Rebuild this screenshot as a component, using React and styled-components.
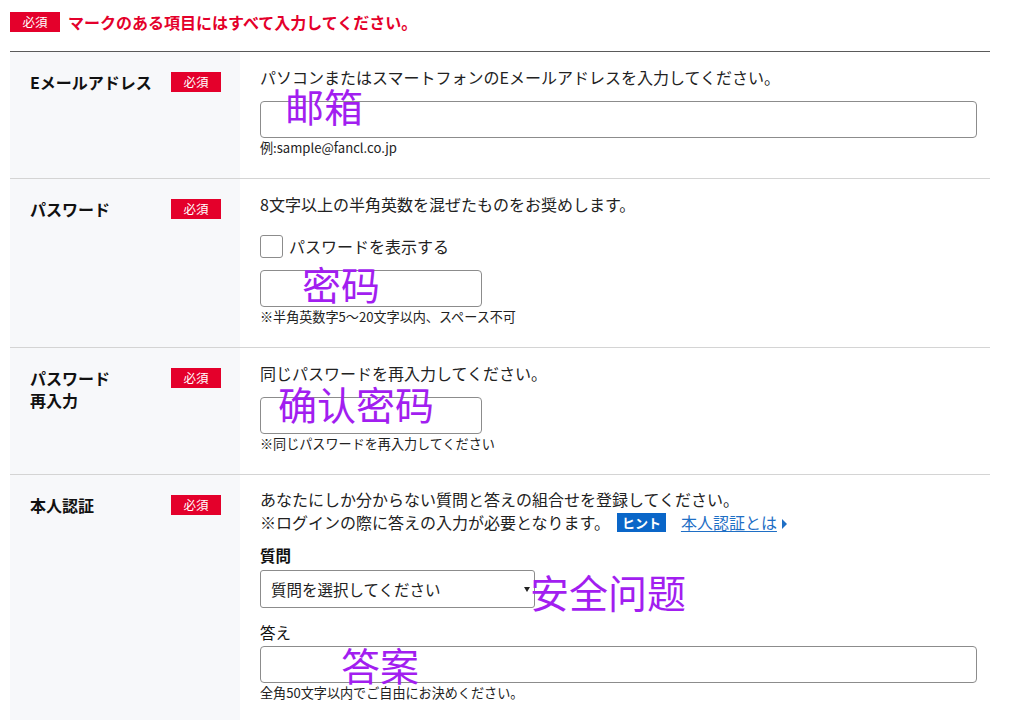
import React from "react";
import styled, { createGlobalStyle } from "styled-components";

const GlobalStyle = createGlobalStyle`
  html, body { margin: 0; padding: 0; background: #fff; }
  body {
    font-family: "Noto Sans CJK JP", "Noto Sans", sans-serif;
    color: #222;
  }
  * { box-sizing: border-box; }
`;

const Page = styled.div`
  width: 990px;
  padding: 12px 0 0 10px;
`;

const Notice = styled.div`
  display: flex;
  align-items: center;
  gap: 8px;
  height: 20px;
  margin-bottom: 19px;
`;

const NoticeText = styled.span`
  color: #e4002b;
  font-weight: 700;
  font-size: 16px;
  line-height: 20px;
`;

const Badge = styled.span`
  display: inline-flex;
  align-items: center;
  justify-content: center;
  flex: none;
  width: 50px;
  height: 20px;
  background: #e4002b;
  color: #fff;
  font-size: 12.5px;
  line-height: 1;
`;

const Form = styled.div`
  border-top: 1px solid #5a5a5a;
`;

const Row = styled.div`
  display: grid;
  grid-template-columns: 230px 1fr;
  border-bottom: ${(p) => (p.$last ? "none" : "1px solid #d4d4d4")};
`;

const LabelCell = styled.div`
  background: #f7f8fa;
  display: flex;
  justify-content: space-between;
  align-items: flex-start;
  padding: 20px 19px 20px 20px;
`;

const Label = styled.div`
  font-weight: 700;
  font-size: 16px;
  line-height: 22px;
  color: #111;
  margin-top: -1px;
`;

const FieldCell = styled.div`
  padding: 13px 13px 21px 20px;
  display: flex;
  flex-direction: column;
  align-items: flex-start;
`;

const Desc = styled.p`
  margin: 0;
  font-size: 16px;
  line-height: ${(p) => (p.$tight ? "23px" : "24px")};
  color: #222;
`;

const Hint = styled.div`
  margin-top: 1px;
  font-size: 13.1px;
  line-height: 18px;
  color: #222;
`;

const FieldWrap = styled.div`
  position: relative;
  margin-top: ${(p) => p.$mt ?? 12}px;
  width: ${(p) => (p.$full ? "100%" : "auto")};
`;

const TextInput = styled.input`
  display: block;
  width: ${(p) => (p.$w ? `${p.$w}px` : "100%")};
  height: 37px;
  border: 1px solid #8c8c8c;
  border-radius: 4px;
  background: #fff;
  padding: 0 10px;
  font: inherit;
  font-size: 15px;
  outline: none;
`;

const Annotation = styled.span`
  position: absolute;
  left: ${(p) => p.$x}px;
  top: ${(p) => p.$y}px;
  font-family: "Noto Sans CJK SC", "Noto Sans", sans-serif;
  font-size: 39px;
  line-height: 1;
  color: #a21ef0;
  white-space: nowrap;
  pointer-events: none;
`;

const CheckRow = styled.label`
  display: flex;
  align-items: center;
  gap: 6px;
  margin-top: 19px;
  font-size: 16px;
  line-height: 23px;
`;

const CheckBox = styled.span`
  display: inline-block;
  width: 23px;
  height: 23px;
  border: 1px solid #8c8c8c;
  border-radius: 3px;
  background: #fff;
`;

const HintBadge = styled.span`
  display: inline-flex;
  align-items: center;
  justify-content: center;
  vertical-align: 1px;
  width: 49px;
  height: 19px;
  margin-left: 7px;
  background: #0a66c8;
  color: #fff;
  font-weight: 700;
  font-size: 13px;
  line-height: 1;
`;

const HelpLink = styled.a`
  margin-left: 15px;
  color: #1f6fc5;
  text-decoration: underline;
  text-underline-offset: 2px;
  cursor: pointer;
`;

const Arrow = styled.span`
  display: inline-block;
  margin-left: 5px;
  width: 0;
  height: 0;
  border-top: 5px solid transparent;
  border-bottom: 5px solid transparent;
  border-left: 5px solid #1f6fc5;
  vertical-align: 0px;
`;

const SubLabel = styled.div`
  margin-top: ${(p) => p.$mt}px;
  font-size: 15.5px;
  line-height: 22px;
  font-weight: ${(p) => (p.$bold ? 700 : 400)};
  color: #111;
`;

const Select = styled.select`
  display: block;
  appearance: none;
  -webkit-appearance: none;
  width: 275px;
  height: 38px;
  border: 1px solid #8c8c8c;
  border-radius: 3px;
  background: #fff;
  padding: 0 10px;
  font: inherit;
  font-size: 15.5px;
  color: #222;
`;

const Caret = styled.span`
  position: absolute;
  left: 264px;
  top: 17px;
  width: 0;
  height: 0;
  border-left: 3px solid transparent;
  border-right: 3px solid transparent;
  border-top: 5px solid #222;
  pointer-events: none;
`;

function Req() {
  return <Badge>必須</Badge>;
}

export default function App() {
  return (
    <>
      <GlobalStyle />
      <Page>
        <Notice>
          <Badge>必須</Badge>
          <NoticeText>マークのある項目にはすべて入力してください。</NoticeText>
        </Notice>
        <Form>
          <Row>
            <LabelCell>
              <Label>Eメールアドレス</Label>
              <Req />
            </LabelCell>
            <FieldCell>
              <Desc>パソコンまたはスマートフォンのEメールアドレスを入力してください。</Desc>
              <FieldWrap $full>
                <TextInput type="text" />
                <Annotation $x={25} $y={-15}>邮箱</Annotation>
              </FieldWrap>
              <Hint>例:sample@fancl.co.jp</Hint>
            </FieldCell>
          </Row>

          <Row>
            <LabelCell>
              <Label>パスワード</Label>
              <Req />
            </LabelCell>
            <FieldCell>
              <Desc>8文字以上の半角英数を混ぜたものをお奨めします。</Desc>
              <CheckRow>
                <CheckBox />
                パスワードを表示する
              </CheckRow>
              <FieldWrap>
                <TextInput type="password" $w={222} />
                <Annotation $x={42} $y={-6}>密码</Annotation>
              </FieldWrap>
              <Hint>※半角英数字5～20文字以内、スペース不可</Hint>
            </FieldCell>
          </Row>

          <Row>
            <LabelCell>
              <Label>
                パスワード
                <br />
                再入力
              </Label>
              <Req />
            </LabelCell>
            <FieldCell>
              <Desc>同じパスワードを再入力してください。</Desc>
              <FieldWrap>
                <TextInput type="password" $w={222} />
                <Annotation $x={18} $y={-13}>确认密码</Annotation>
              </FieldWrap>
              <Hint>※同じパスワードを再入力してください</Hint>
            </FieldCell>
          </Row>

          <Row $last>
            <LabelCell>
              <Label>本人認証</Label>
              <Req />
            </LabelCell>
            <FieldCell>
              <Desc $tight>
                あなたにしか分からない質問と答えの組合せを登録してください。
                <br />
                ※ログインの際に答えの入力が必要となります。
                <HintBadge>ヒント</HintBadge>
                <HelpLink>本人認証とは</HelpLink>
                <Arrow />
              </Desc>
              <SubLabel $mt={10} $bold>
                質問
              </SubLabel>
              <FieldWrap $mt={4}>
                <Select defaultValue="">
                  <option value="">質問を選択してください</option>
                </Select>
                <Caret />
                <Annotation $x={270} $y={2}>安全问题</Annotation>
              </FieldWrap>
              <SubLabel $mt={13}>答え</SubLabel>
              <FieldWrap $mt={3} $full>
                <TextInput type="text" />
                <Annotation $x={81} $y={-1}>答案</Annotation>
              </FieldWrap>
              <Hint>全角50文字以内でご自由にお決めください。</Hint>
            </FieldCell>
          </Row>
        </Form>
      </Page>
    </>
  );
}
